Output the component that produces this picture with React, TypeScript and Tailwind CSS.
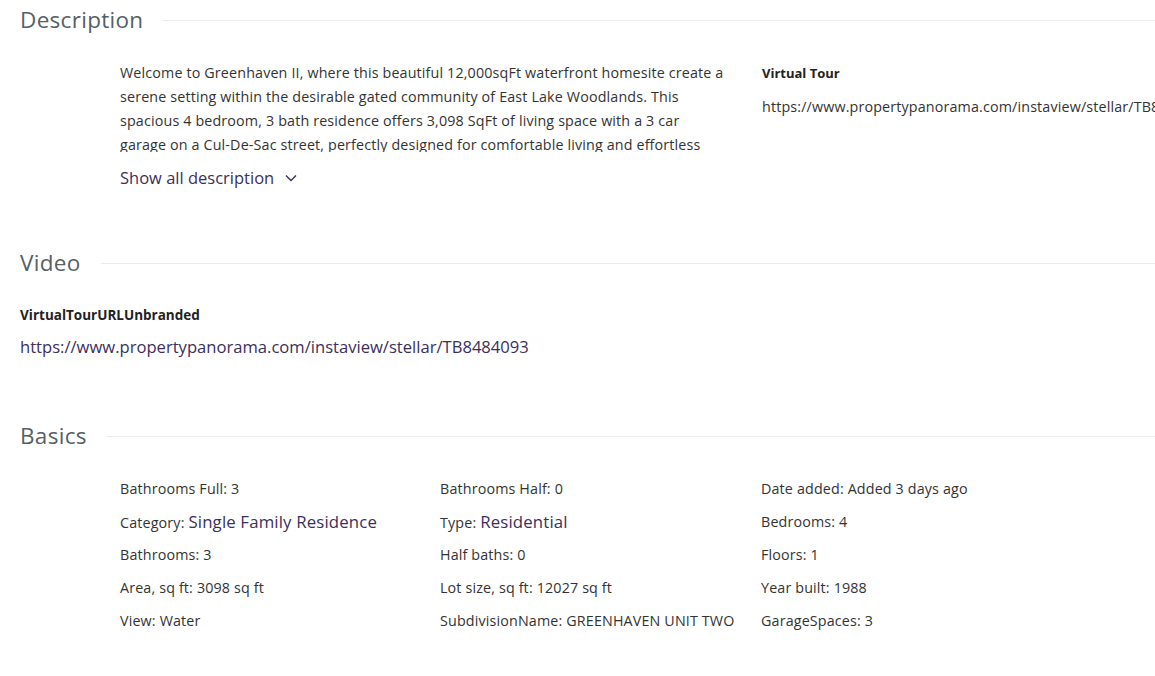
import React from "react";

const font = { fontFamily: '"Open Sans", "Noto Sans", sans-serif' };

function Heading({ title }: { title: string }) {
  return (
    <div className="flex items-center h-[40px]">
      <h2 className="text-[22.5px] tracking-[0.3px] text-[#565f66] pl-[20px] pr-[20px] leading-none">{title}</h2>
      <div className="flex-1 h-px bg-[#ececec]" />
    </div>
  );
}

const basics: [string, string, boolean?][] = [
  ["Bathrooms Full", "3"],
  ["Bathrooms Half", "0"],
  ["Date added", "Added 3 days ago"],
  ["Category", "Single Family Residence", true],
  ["Type", "Residential", true],
  ["Bedrooms", "4"],
  ["Bathrooms", "3"],
  ["Half baths", "0"],
  ["Floors", "1"],
  ["Area, sq ft", "3098 sq ft"],
  ["Lot size, sq ft", "12027 sq ft"],
  ["Year built", "1988"],
  ["View", "Water"],
  ["SubdivisionName", "GREENHAVEN UNIT TWO"],
  ["GarageSpaces", "3"],
];

const lines = [
  "Welcome to Greenhaven II, where this beautiful 12,000sqFt waterfront homesite create a",
  "serene setting within the desirable gated community of East Lake Woodlands. This",
  "spacious 4 bedroom, 3 bath residence offers 3,098 SqFt of living space with a 3 car",
  "garage on a Cul-De-Sac street, perfectly designed for comfortable living and effortless",
];

export default function App() {
  return (
    <div className="w-[1155px] h-[676px] overflow-hidden bg-white text-[#333]" style={font}>
      <Heading title="Description" />
      <div className="flex pt-[21px] pl-[120px]">
        <div className="w-[620px] shrink-0">
          <div className="h-[91px] overflow-hidden text-[14.3px] tracking-[0.15px] leading-[24px] text-[#333]">
            {lines.map((l, i) => (
              <div key={i} className="whitespace-nowrap">{l}</div>
            ))}
          </div>
          <button className="mt-[14px] flex items-center gap-[10px] text-[16.5px] text-[#3b2f5c] leading-[24px]">
            Show all description
            <svg width="14" height="14" viewBox="0 0 14 14" fill="none" stroke="#3b2f5c" strokeWidth="1.4">
              <path d="M2 4.5 L7 9.5 L12 4.5" />
            </svg>
          </button>
        </div>
        <div className="ml-[22px] whitespace-nowrap">
          <div className="text-[13px] font-bold text-[#222] leading-[24px]">Virtual Tour</div>
          <div className="mt-[10px] text-[14.3px] tracking-[0.15px] leading-[24px] text-[#333]">
            https://www.propertypanorama.com/instaview/stellar/TB8484093
          </div>
        </div>
      </div>

      <div className="mt-[53px]">
        <Heading title="Video" />
      </div>
      <div className="pl-[20px] pt-[20px]">
        <div className="text-[13.5px] font-bold text-[#222] leading-[24px]">VirtualTourURLUnbranded</div>
        <div className="mt-[8px] text-[16.6px] text-[#3b2f5c] leading-[24px]">
          https://www.propertypanorama.com/instaview/stellar/TB8484093
        </div>
      </div>

      <div className="mt-[57px]">
        <Heading title="Basics" />
      </div>
      <div className="grid grid-cols-[320px_321px_320px] pl-[120px] pt-[21px] gap-y-[8.7px]">
        {basics.map(([k, v, link], i) => (
          <div key={i} className="text-[14.3px] tracking-[0.15px] leading-[24px] text-[#333] whitespace-nowrap">
            {k}:{" "}
            {link ? <span className="text-[16.8px] text-[#3b2f5c]">{v}</span> : v}
          </div>
        ))}
      </div>
    </div>
  );
}
